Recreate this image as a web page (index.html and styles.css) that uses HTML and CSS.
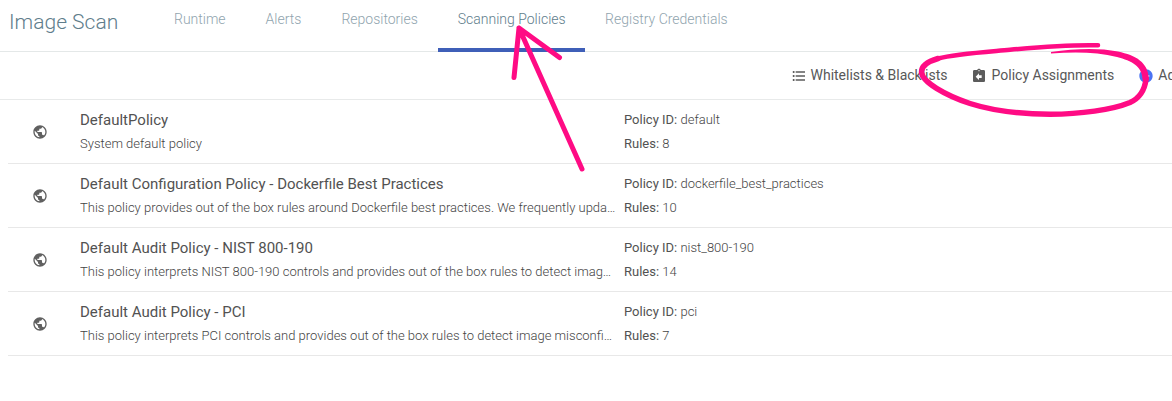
FILE: index.html
```html
<!DOCTYPE html>
<html lang="en">
<head>
<meta charset="utf-8">
<title>Image Scan</title>
<link rel="stylesheet" href="styles.css">
</head>
<body>
<svg class="defs" width="0" height="0">
  <symbol id="public" viewBox="0 0 24 24"><path d="M12 2C6.48 2 2 6.48 2 12s4.48 10 10 10 10-4.48 10-10S17.52 2 12 2zm-1 17.93c-3.95-.49-7-3.85-7-7.93 0-.62.08-1.21.21-1.79L9 15v1c0 1.1.9 2 2 2v1.93zm6.9-2.54c-.26-.81-1-1.39-1.9-1.39h-1v-3c0-.55-.45-1-1-1H8v-2h2c.55 0 1-.45 1-1V7h2c1.1 0 2-.9 2-2v-.41c2.93 1.19 5 4.06 5 7.41 0 2.08-.8 3.97-2.1 5.39z"/></symbol>
</svg>
<header class="header">
  <h1 class="title">Image Scan</h1>
  <nav class="tabs">
    <a class="tab">Runtime</a>
    <a class="tab">Alerts</a>
    <a class="tab">Repositories</a>
    <a class="tab active">Scanning Policies</a>
    <a class="tab">Registry Credentials</a>
  </nav>
</header>
<div class="toolbar">
  <div class="action lists"><svg class="icon" viewBox="0 0 24 24"><path d="M4 10.5c-.83 0-1.5.67-1.5 1.5s.67 1.5 1.5 1.5 1.5-.67 1.5-1.5-.67-1.5-1.5-1.5zm0-6c-.83 0-1.5.67-1.5 1.5S3.17 7.5 4 7.5 5.500 6.830 5.500 6 4.830 4.500 4 4.500zm0 12c-.83 0-1.500.68-1.500 1.500s.68 1.500 1.500 1.500 1.500-.68 1.500-1.500-.67-1.500-1.500-1.500zM7 19h14v-2H7v2zm0-6h14v-2H7v2zm0-8v2h14V5H7z"/></svg><span>Whitelists &amp; Blacklists</span></div>
  <div class="action assign"><svg class="icon" viewBox="0 0 24 24"><path d="M19 3h-4.180C14.400 1.840 13.300 1 12 1s-2.400.84-2.820 2H5c-1.100 0-2 .9-2 2v14c0 1.100.9 2 2 2h14c1.100 0 2-.9 2-2V5c0-1.100-.9-2-2-2zm-7 0c.55 0 1 .45 1 1s-.45 1-1 1-1-.45-1-1 .45-1 1-1zm4 12h-4v3l-5-5 5-5v3h4v4z"/></svg><span>Policy Assignments</span></div>
  <div class="action add"><svg class="icon" viewBox="0 0 24 24"><path d="M12 2C6.480 2 2 6.480 2 12s4.480 10 10 10 10-4.480 10-10S17.520 2 12 2zm5 11h-4v4h-2v-4H7v-2h4V7h2v4h4v2z"/></svg><span>Add Policy</span></div>
</div>
<main class="list">
  <div class="row"><svg class="globe"><use href="#public"/></svg>
    <div class="info"><div class="name">DefaultPolicy</div><div class="desc">System default policy</div></div>
    <div class="meta"><div><b>Policy ID:</b> default</div><div><b>Rules:</b> 8</div></div></div>
  <div class="row"><svg class="globe"><use href="#public"/></svg>
    <div class="info"><div class="name">Default Configuration Policy - Dockerfile Best Practices</div><div class="desc">This policy provides out of the box rules around Dockerfile best practices. We frequently upda…</div></div>
    <div class="meta"><div><b>Policy ID:</b> dockerfile_best_practices</div><div><b>Rules:</b> 10</div></div></div>
  <div class="row"><svg class="globe"><use href="#public"/></svg>
    <div class="info"><div class="name">Default Audit Policy - NIST 800-190</div><div class="desc">This policy interprets NIST 800-190 controls and provides out of the box rules to detect imag…</div></div>
    <div class="meta"><div><b>Policy ID:</b> nist_800-190</div><div><b>Rules:</b> 14</div></div></div>
  <div class="row"><svg class="globe"><use href="#public"/></svg>
    <div class="info"><div class="name">Default Audit Policy - PCI</div><div class="desc">This policy interprets PCI controls and provides out of the box rules to detect image misconfi…</div></div>
    <div class="meta"><div><b>Policy ID:</b> pci</div><div><b>Rules:</b> 7</div></div></div>
</main>
<svg class="marks" viewBox="0 0 1172 401">
  <path class="arrow" d="M582 169 519 28M514 77.500 519 28 559.500 57.500"/>
  <path class="loop thin" d="M1098 45.300C1068 44.500 1040 47 1010 49.800C982 52.300 955 54 938 58.500"/>
  <path class="loop" d="M938 58.500C926 62 921.500 67 921.500 72C922 82 945 95 970 103.500C995 111.500 1020 114 1050 114.300C1080 114 1112 110 1130 102.500C1142 97 1145 88 1146 79"/>
  <path class="taper" d="M1051 52C1075 48.500 1098 47.500 1118 51.500C1136 55.500 1148 62 1149 79A3.300 3.300 0 0 1 1142.500 79C1142 66 1132 61 1117 57C1098 52 1075 51.500 1051 53.500Z"/>
</svg>
</body>
</html>
```
FILE: styles.css
```css
* { box-sizing: border-box; }
body {
  margin: 0;
  height: 401px;
  position: relative;
  overflow: hidden;
  background: #fff;
  color: #444;
  font-family: Roboto, sans-serif;
  font-weight: 300;
}
.defs { display: none; }
.header {
  display: flex;
  height: 52px;
  border-bottom: 1px solid #e4e8e8;
}
.title {
  margin: 0;
  padding-left: 9px;
  width: 154px;
  font-size: 21px;
  font-weight: 300;
  line-height: 44px;
  color: #607d8b;
  white-space: nowrap;
}
.tabs { display: flex; }
.tab {
  padding: 0 20px;
  height: 52px;
  font-size: 14px;
  line-height: 38px;
  color: #90a4ae;
  white-space: nowrap;
}
.tab.active {
  padding-right: 19.500px;
  color: #607d8b;
  border-bottom: 4px solid #3f5fb8;
}
.toolbar {
  display: flex;
  gap: 24px;
  height: 48px;
  align-items: center;
  padding-left: 790.500px;
  border-bottom: 1px solid #e8eaea;
}
.action {
  display: flex;
  flex-shrink: 0;
  align-items: center;
  gap: 4px;
  font-size: 14px;
  font-weight: 400;
  white-space: nowrap;
  color: #585858;
}
.action span { padding-bottom: 2px; }
.icon { width: 16px; height: 16px; fill: #5c5c5c; }
.assign .icon { margin-left: -1px; margin-right: 1px; }
.add .icon { fill: #4a73f3; }
.list { margin-left: 8px; }
.row {
  display: grid;
  grid-template-columns: 72px 536px 1fr;
  height: 64px;
  align-items: center;
  border-bottom: 1px solid #e8e8e8;
}
.globe { width: 16px; height: 16px; margin-left: 24px; fill: #606060; }
.info { overflow: hidden; }
.name { font-size: 15px; font-weight: 400; line-height: 24px; color: #525252; }
.desc {
  font-size: 13px;
  line-height: 24px;
  overflow: hidden;
  white-space: nowrap;
  text-overflow: ellipsis;
}
.meta { padding-left: 8px; font-size: 13px; line-height: 24px; }
.meta b { font-weight: 400; color: #525252; }
.marks { position: absolute; inset: 0; width: 1172px; height: 401px; }
.arrow, .loop {
  fill: none;
  stroke: #ff0b84;
  stroke-width: 5;
  stroke-linecap: round;
  stroke-linejoin: round;
}
.loop { stroke-width: 5.500; }
.loop.thin { stroke-width: 4.500; }
.taper { fill: #ff0b84; }
```
